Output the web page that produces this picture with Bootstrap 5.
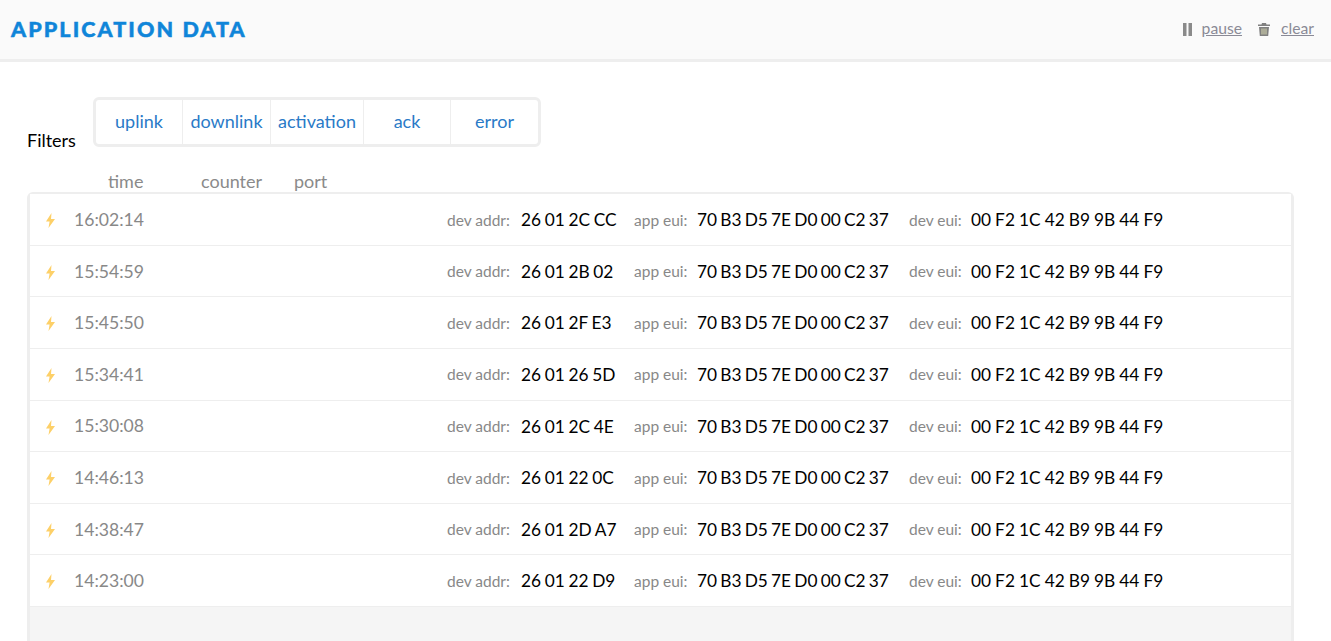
<!DOCTYPE html>
<html lang="en"><head><meta charset="utf-8"><title>Application data</title>
<link rel="stylesheet" href="https://cdn.jsdelivr.net/npm/bootstrap@5.3.0/dist/css/bootstrap.min.css">
<style>
html,body{height:641px;overflow:hidden}
body{font-family:Lato,sans-serif;background:#fff;color:#000}
.top-bar{height:62px;background:#fafafa;border-bottom:3px solid #eee;padding:0 17px 0 11px}
.app-title{font-family:Lato,sans-serif;font-weight:900;font-size:21.5px;letter-spacing:2.1px;color:#0f85d9;margin:0;-webkit-text-stroke:.5px #0f85d9}
.top-links{margin-bottom:2px}
.top-link{font-size:15.7px;color:#8a8a96;text-decoration:underline}
.page-main{padding:35px 37px 0 27px}
.filter-label{font-size:18px;width:66px;line-height:20px;margin-bottom:-3px}
.filter-box{border:3px solid #eee;border-radius:6px;height:50px}
.filter-item{height:44px;padding-bottom:2px;color:#2a7ac7;font-size:18px;border-left:1px solid #eee;text-decoration:none}
.filter-item:first-child{border-left:0}
.col-heads{height:45px;padding-top:24px;color:#8a8a8a;font-size:18px;line-height:20px}
.data-box{border:3px solid #eee;border-bottom:0;border-radius:6px 6px 0 0;background:#f5f5f5;height:460px}
.row-stack{margin-top:-.75px}
.data-row{height:51.6px;padding-top:1.4px;background:#fff;border-bottom:1px solid #eee}
.bolt{width:11px;height:15px;margin-left:15px;margin-top:1px;flex:none}
.row-time{color:#888;font-size:17.6px;width:373px;margin-left:18px;flex:none}
.lab{color:#888;font-size:15.5px;flex:none}
.lab-a{width:74px}.lab-b{width:63px}.lab-c{width:62px}
.hex{color:#000;font-size:17.3px;white-space:nowrap;flex:none}
.hex-a{width:113px;word-spacing:-.75px}.hex-b{width:212px;word-spacing:-1.2px}.hex-c{word-spacing:-.35px}
</style></head><body>
<header class="top-bar d-flex align-items-center justify-content-between">
<h1 class="app-title">APPLICATION DATA</h1>
<div class="top-links d-flex align-items-center">
<svg width="9" height="13" viewBox="0 0 9 13" style="margin-right:10px;margin-top:2px"><rect x="0" y="0" width="3.5" height="13" fill="#8a8a8a"/><rect x="5.5" y="0" width="3.5" height="13" fill="#8a8a8a"/></svg>
<a href="#" class="top-link" style="margin-right:16px">pause</a>
<svg width="12" height="13" viewBox="0 0 12 13" style="margin-right:11px;margin-top:2px"><path fill="#808080" d="M4 0h4l.5 1.500H12V3H0V1.500h3.500zM1 4h10l-.8 9H1.800z"/><path stroke="#d8d8b0" d="M4 5.500v6M6 5.500v6M8 5.500v6"/></svg>
<a href="#" class="top-link">clear</a>
</div></header>
<main class="page-main">
<div class="d-flex align-items-end">
<div class="filter-label">Filters</div>
<nav class="filter-box d-flex">
<a href="#" class="filter-item d-flex align-items-center justify-content-center" style="width:86px">uplink</a>
<a href="#" class="filter-item d-flex align-items-center justify-content-center" style="width:88px">downlink</a>
<a href="#" class="filter-item d-flex align-items-center justify-content-center" style="width:93px">activation</a>
<a href="#" class="filter-item d-flex align-items-center justify-content-center" style="width:87px">ack</a>
<a href="#" class="filter-item d-flex align-items-center justify-content-center" style="width:88px">error</a>
</nav></div>
<div class="col-heads d-flex" style="padding-left:81px"><span style="width:93px">time</span><span style="width:93px">counter</span><span>port</span></div>
<div class="data-box"><div class="row-stack" id="rows"></div></div>
</main>
<script>
var d=[["16:02:14","26 01 2C CC"],["15:54:59","26 01 2B 02"],["15:45:50","26 01 2F E3"],["15:34:41","26 01 26 5D"],["15:30:08","26 01 2C 4E"],["14:46:13","26 01 22 0C"],["14:38:47","26 01 2D A7"],["14:23:00","26 01 22 D9"]];
document.getElementById('rows').innerHTML=d.map(function(r){return '<div class="data-row d-flex align-items-center"><svg class="bolt" viewBox="0 0 11 15"><path fill="#fdd068" d="M6.500 0 1 8.500h3.600L3.500 15 10 6H6z"/></svg><span class="row-time">'+r[0]+'</span><span class="lab lab-a">dev addr:</span><span class="hex hex-a">'+r[1]+'</span><span class="lab lab-b">app eui:</span><span class="hex hex-b">70 B3 D5 7E D0 00 C2 37</span><span class="lab lab-c">dev eui:</span><span class="hex hex-c">00 F2 1C 42 B9 9B 44 F9</span></div>'}).join('');
</script>
</body></html>
